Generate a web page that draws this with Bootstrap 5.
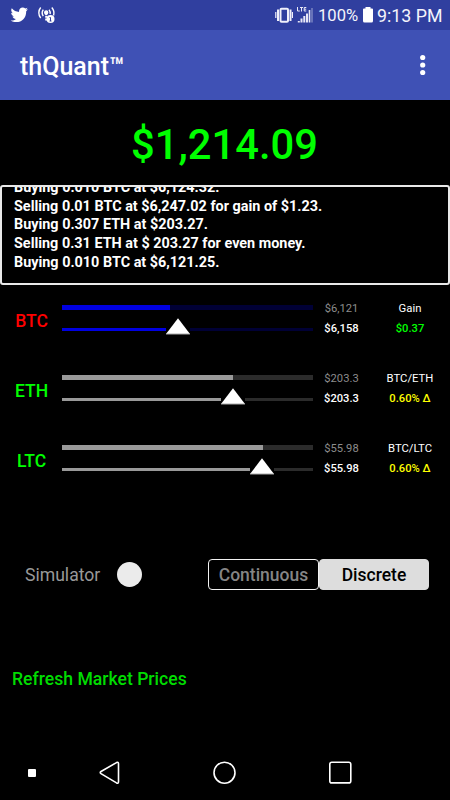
<!DOCTYPE html>
<html lang="en">
<head>
<meta charset="utf-8">
<meta name="viewport" content="width=device-width, initial-scale=1">
<title>thQuant</title>
<link rel="stylesheet" href="https://cdn.jsdelivr.net/npm/bootstrap@5.3.0/dist/css/bootstrap.min.css">
<style>
body { background: #000; color: #fff; font-family: Roboto, "Liberation Sans", sans-serif; font-weight: 500; }
.screen { width: 450px; height: 800px; }
.status { height: 30px; background: #303f9f; font-weight: 400; line-height: 30px; padding: 0 8px 0 10px; color: #f4f4fb; }
.pct { font-size: 16.6px; margin-left: 5px; width: 45px; padding-top: 1px; }
.clock { font-size: 17.8px; width: 65px; padding-top: 1px; margin-left: 4px; white-space: nowrap; }
.appbar { height: 70px; background: #3f51b5; padding: 0 24px 0 20px; }
.title { font-size: 25px; line-height: 70px; padding-top: 4px; }
.balance { height: 85px; font-size: 41.700px; line-height: 89px; color: #0f0; padding-right: 1px; }
.log { height: 100px; border: 2px solid #e8e8e8; border-radius: 3px; padding: 0 12px 10.500px; font-size: 14.400px; line-height: 18.700px; font-weight: 700; }
.coin { height: 70px; }
.symbol { width: 62px; font-size: 17.500px; padding: 1px 0 0 1px; line-height: 70px; }
.tracks { width: 251px; padding-top: 20px; }
.thick { height: 5px; background: var(--rest); }
.thin { height: 3px; margin-top: 18px; background: var(--rest); }
.fill { height: 100%; background: var(--fill); }
.thumb { top: -11px; margin-left: -13px; width: 26px; height: 18px; }
.blue { --fill: #0000e0; --rest: #000035; }
.grey { --fill: #999; --rest: #2b2b2b; }
.prices { width: 57px; font-size: 11.200px; line-height: 20px; padding: 14px 1px 0 1px; }
.pair { width: 80px; font-size: 11.200px; line-height: 20px; padding-top: 14px; }
.label { font-weight: 400; font-size: 11.300px; }
.old { color: #8c8c8c; font-weight: 400; }
.red { color: #f00; } .green { color: #0f0; } .yellow { color: #ff0; }
.modes { height: 31px; margin-top: 64px; padding: 0 21px 0 25px; }
.sim { width: 92px; font-size: 17.600px; font-weight: 400; color: #999; padding-top: 2px; }
.knob { width: 25px; height: 25px; background: #ebebeb; }
.mode { width: 110px; height: 31px; border: 1.500px solid #ddd; border-radius: 4px; font-size: 17.500px; font-weight: 500; line-height: 30px; padding: 0; }
.mode-off { width: 111px; color: #858585; border-color: #f2f2f2; }
.mode-on { background: #ddd; color: #000; }
.refresh { color: #00dc00; font-size: 17.600px; line-height: 24px; margin: 77px 0 0 12px; }
.navkeys { height: 55px; }
svg { display: block; flex: none; }
</style>
<script src="https://cdn.jsdelivr.net/npm/bootstrap@5.3.0/dist/js/bootstrap.bundle.min.js"></script>
</head>
<body>
<main class="screen d-flex flex-column overflow-hidden">
  <div class="status d-flex align-items-center">
    <svg width="18" height="30" viewBox="0 0 18 30" fill="#fff"><path d="M.7 20.500c2 .2 3.800-.3 5.200-1.500-1.700-.1-2.900-1.100-3.400-2.600h1.500C2.300 15.900 1.200 14.500 1.200 12.800l1.600.4C1.200 12 .8 10.100 1.800 8.300c1.900 2.300 4.300 3.500 7.300 3.700-.5-2.500 1.300-4.500 3.600-4.500 1 0 1.900.4 2.600 1.100l2.200-.8-1.500 2 2-.5-1.800 1.900C16.300 17.800 12 22.100 6.300 22.100c-2.100 0-4-.6-5.600-1.600z"/></svg>
    <svg class="ms-2" width="22" height="30" viewBox="0 0 22 30" fill="none" stroke="#fff" stroke-width="1.400"><path d="M4.700 7.500c-2.500 3-2.500 7.500 0 10.500M7.300 9.700c-1.400 2-1.400 4.500 0 6.500M15.800 7.500c2 2.300 2.600 5 1.800 8M13 9.700c1 1.200 1.400 2.700 1.100 4.300"/><path d="M10.200 13v8" stroke-dasharray="2 .8" stroke-width="2"/><circle cx="10.200" cy="12.500" r="1.500" fill="#fff"/><circle cx="14.500" cy="19" r="4" fill="#fff" stroke="none"/><path d="M13.500 17.500h1v3.500m-1 0h2" stroke="#303f9f" stroke-width="1"/></svg>
    <svg class="ms-auto" width="19" height="30" viewBox="0 0 19 30" fill="none" stroke="#f0f0fa"><rect x="6.500" y="8.700" width="7.500" height="13" rx="1" stroke-width="2"/><path d="M4 9.500v11.500M16.500 9.500v11.500" stroke-width="2"/><path d="M1.800 12v6M18.500 12v6" stroke-width="1.200"/></svg>
    <svg class="ms-1" width="16" height="30" viewBox="0 0 16 30" stroke="#e8e8f6" fill="none"><path d="M.5 7v4h2.300M3 7.500h3M4.500 7.500v4M9.300 7.500H7.200v3.500h2.100M7.200 9.200h2" stroke-width="1"/><path d="M1.800 22.500v-1.500M4.500 22.500v-4M7.300 22.500v-6.500M10 22.500v-9" stroke-width="2"/><path d="M12.500 22.500V10" stroke-width="1.600"/><path d="M15 22.500V8" stroke="#8d96cc" stroke-width="1.200"/></svg>
    <span class="pct">100%</span>
    <svg width="10" height="30" viewBox="0 0 10 30" fill="#fff"><path d="M2.500 7h5v1.500H9q1 0 1 1V21q0 1.500-1.500 1.500h-7Q0 22.500 0 21V9.500q0-1 1-1h1.500z"/></svg>
    <span class="clock">9:13 PM</span>
  </div>
  <header class="appbar d-flex align-items-center justify-content-between">
    <div class="title">thQuant™</div>
    <svg width="6" height="22" viewBox="0 0 6 22" fill="#fff"><circle cx="2.700" cy="3.500" r="2.600"/><circle cx="2.700" cy="11" r="2.600"/><circle cx="2.700" cy="18.500" r="2.600"/></svg>
  </header>
  <div class="balance text-center">$1,214.09</div>
  <section class="log d-flex flex-column justify-content-end overflow-hidden text-nowrap">
    <div>Buying 0.010 BTC at $6,124.32.</div>
    <div>Selling 0.01 BTC at $6,247.02 for gain of $1.23.</div>
    <div>Buying 0.307 ETH at $203.27.</div>
    <div>Selling 0.31 ETH at $ 203.27 for even money.</div>
    <div>Buying 0.010 BTC at $6,121.25.</div>
  </section>
  <section class="coin blue d-flex">
    <div class="symbol red text-center">BTC</div>
    <div class="tracks"><div class="thick"><div class="fill" style="width:43%"></div></div>
      <div class="thin position-relative"><div class="fill" style="width:46.400%"></div><svg class="thumb position-absolute" style="left:46.400%" viewBox="0 0 26 18"><path d="M1 8h24v8H1z" fill="#000"/><path d="M13 1.300L25 17H1z" fill="#fff"/><path d="M1 17h24" stroke="#aaa"/></svg></div></div>
    <div class="prices text-center"><div class="old">$6,121</div><div>$6,158</div></div>
    <div class="pair text-center"><div class="label">Gain</div><div class="green">$0.37</div></div>
  </section>
  <section class="coin grey d-flex">
    <div class="symbol green text-center">ETH</div>
    <div class="tracks"><div class="thick"><div class="fill" style="width:68%"></div></div>
      <div class="thin position-relative"><div class="fill" style="width:68.300%"></div><svg class="thumb position-absolute" style="left:68.300%" viewBox="0 0 26 18"><path d="M1 8h24v8H1z" fill="#000"/><path d="M13 1.300L25 17H1z" fill="#fff"/><path d="M1 17h24" stroke="#aaa"/></svg></div></div>
    <div class="prices text-center"><div class="old">$203.3</div><div>$203.3</div></div>
    <div class="pair text-center"><div class="label">BTC/ETH</div><div class="yellow">0.60% Δ</div></div>
  </section>
  <section class="coin grey d-flex">
    <div class="symbol green text-center">LTC</div>
    <div class="tracks"><div class="thick"><div class="fill" style="width:80%"></div></div>
      <div class="thin position-relative"><div class="fill" style="width:79.700%"></div><svg class="thumb position-absolute" style="left:79.700%" viewBox="0 0 26 18"><path d="M1 8h24v8H1z" fill="#000"/><path d="M13 1.300L25 17H1z" fill="#fff"/><path d="M1 17h24" stroke="#aaa"/></svg></div></div>
    <div class="prices text-center"><div class="old">$55.98</div><div>$55.98</div></div>
    <div class="pair text-center"><div class="label">BTC/LTC</div><div class="yellow">0.60% Δ</div></div>
  </section>
  <section class="modes d-flex align-items-center">
    <div class="sim">Simulator</div>
    <div class="knob rounded-circle"></div>
    <div class="d-flex ms-auto">
      <button class="mode mode-off btn">Continuous</button>
      <button class="mode mode-on btn">Discrete</button>
    </div>
  </section>
  <div class="refresh">Refresh Market Prices</div>
  <nav class="navkeys mt-auto">
    <svg width="450" height="55" viewBox="0 0 450 55" fill="none" stroke="#fff" stroke-width="1.600"><rect x="28" y="24" width="8" height="8" rx="1" fill="#fff" stroke="none"/><path d="M116.500 17.600L101 26.500q-1.500 1 0 2.200l15.500 9.200q2 .9 2-1.200V18.700q0-2-2-1.100z"/><circle cx="224.500" cy="27.700" r="10.500"/><rect x="329.800" y="17.300" width="21" height="20.600" rx="2"/></svg>
  </nav>
</main>
</body>
</html>
